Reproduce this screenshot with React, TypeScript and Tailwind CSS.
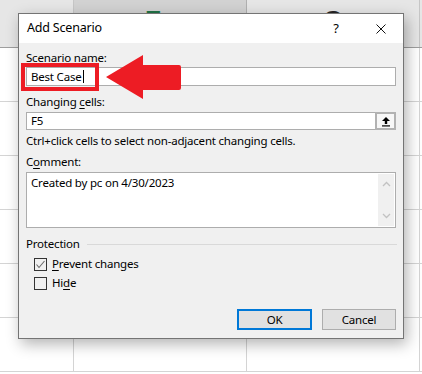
import React from "react";

const font = { fontFamily: '"Segoe UI", "Noto Sans", sans-serif' };

function U({ children }: { children: React.ReactNode }) {
  return <span className="underline underline-offset-2 decoration-1">{children}</span>;
}

function Checkbox({ checked }: { checked: boolean }) {
  return (
    <div className="w-[13px] h-[13px] border border-[#333] bg-[#f0f0f0] flex items-center justify-center">
      {checked && (
        <svg width="11" height="11" viewBox="0 0 11 11">
          <path d="M1.5 5.5 L4 8.5 L9.5 2" fill="none" stroke="#6b6b6b" strokeWidth="1.1" />
        </svg>
      )}
    </div>
  );
}

export default function App() {
  const rows = [0, 1, 2, 3, 4, 5];
  return (
    <div className="relative w-[422px] h-[374px] overflow-hidden bg-white" style={font}>
      {/* Spreadsheet background */}
      <div className="flex flex-col w-[422px]">
        <div className="flex h-[48px] border-b border-[#9e9e9e]">
          <div className="w-[74px] bg-[#e6e6e6] border-r border-[#c6c6c6]" />
          <div className="w-[173px] bg-[#d2d2d2] border-r border-[#b0b0b0] flex justify-center pt-[7px] pr-[14px]">
            <span className="text-[26px] leading-none font-bold text-[#217346]" style={{ fontFamily: '"Liberation Sans", sans-serif' }}>F</span>
          </div>
          <div className="w-[173px] bg-[#e6e6e6] border-r border-[#c6c6c6] flex justify-center pt-[7px]">
            <span className="text-[26px] leading-none font-bold text-[#262626]" style={{ fontFamily: '"Liberation Sans", sans-serif' }}>G</span>
          </div>
          <div className="flex-1 bg-[#e6e6e6]" />
        </div>
        {rows.map((r) => (
          <div key={r} className="flex h-[54px] border-b border-[#d4d4d4]">
            <div className="w-[74px] border-r border-[#d4d4d4]" />
            <div className="w-[173px] border-r border-[#d4d4d4]" />
            <div className="w-[173px] border-r border-[#d4d4d4]" />
            <div className="flex-1" />
          </div>
        ))}
      </div>

      {/* Dialog */}
      <div className="absolute left-[18px] top-[13px] w-[386px] h-[326px] border border-[#747474] bg-[#f0f0f0] shadow-[3px_5px_14px_rgba(0,0,0,0.3)] flex flex-col text-[11.5px] tracking-[-0.2px] text-black">
        <div className="h-[29px] bg-white flex items-center pl-[8px] pr-[17px]">
          <span className="text-[12.5px] flex-1">Add Scenario</span>
          <span className="text-[13px] w-[10px] text-center mr-[35px]">?</span>
          <svg width="10" height="10" viewBox="0 0 10 10">
            <path d="M0.5 0.5 L9.5 9.5 M9.5 0.5 L0.5 9.5" stroke="#111" strokeWidth="1" />
          </svg>
        </div>
        <div className="flex flex-col px-[7px] pt-[7px]">
          <div className="h-[16px] flex items-center">
            <span>Scenario <U>n</U>ame:</span>
          </div>
          <div className="mt-[1px] h-[19px] border border-[#adadad] bg-white flex items-center pl-[4px]">
            <span>Best Case</span>
            <span className="w-[1px] h-[13px] bg-black ml-[1px]" />
          </div>
          <div className="mt-[8px] h-[16px] flex items-center">
            <span>Changing <U>c</U>ells:</span>
          </div>
          <div className="mt-[2px] h-[18px] border border-[#adadad] bg-white flex items-center pl-[4px] relative">
            <span className="flex-1">F5</span>
            <div className="w-[21px] h-[18px] -mr-[1px] border-2 border-[#b2b2b2] bg-[#f7f7f7] flex items-center justify-center">
              <svg width="10" height="11" viewBox="0 0 10 11">
                <path d="M5 1 L9 5 L6.2 5 L6.2 8 L3.8 8 L3.8 5 L1 5 Z" fill="#000" />
                <rect x="1" y="9.3" width="8" height="1.2" fill="#000" />
              </svg>
            </div>
          </div>
          <div className="mt-[3px] h-[16px] flex items-center">
            <span>Ctrl+click cells to select non-adjacent changing cells.</span>
          </div>
          <div className="mt-[5px] h-[16px] flex items-center">
            <span>C<U>o</U>mment:</span>
          </div>
          <div className="mt-[2px] h-[56px] border border-[#adadad] bg-white flex">
            <div className="flex-1 pl-[4px] pt-[1px]">Created by pc on 4/30/2023</div>
            <div className="w-[16px] my-[1px] mr-[1px] bg-[#f0f0f0] flex flex-col items-center justify-between py-[7px]">
              <svg width="9" height="6" viewBox="0 0 9 6">
                <path d="M1 5 L4.5 1.5 L8 5" fill="none" stroke="#c2c2c2" strokeWidth="1.3" />
              </svg>
              <svg width="9" height="6" viewBox="0 0 9 6">
                <path d="M1 1 L4.5 4.5 L8 1" fill="none" stroke="#c2c2c2" strokeWidth="1.3" />
              </svg>
            </div>
          </div>
          <div className="mt-[8px] h-[16px] flex items-center">
            <span>Protection</span>
            <div className="flex-1 h-[1px] bg-[#d9d9d9] ml-[7px] mr-[-1px]" />
          </div>
          <div className="mt-[4px] h-[16px] flex items-center pl-[8px] gap-[5px]">
            <Checkbox checked />
            <span><U>P</U>revent changes</span>
          </div>
          <div className="mt-[3px] h-[16px] flex items-center pl-[8px] gap-[5px]">
            <Checkbox checked={false} />
            <span>Hi<U>d</U>e</span>
          </div>
          <div className="mt-[18px] flex justify-end gap-[10px]">
            <button className="w-[75px] h-[21px] border-2 border-[#0078d7] bg-[#e1e1e1] flex items-center justify-center">OK</button>
            <button className="w-[74px] h-[21px] border border-[#adadad] bg-[#e1e1e1] flex items-center justify-center">Cancel</button>
          </div>
        </div>
      </div>

      {/* Red highlight box */}
      <div className="absolute left-[21px] top-[63px] w-[78px] h-[28px] border-[4px] border-[#ed1c24]" />

      {/* Red arrow */}
      <svg className="absolute left-0 top-0" width="422" height="374" viewBox="0 0 422 374">
        <path d="M106 77 L143 55 L143 65 L179 65 Q181 65 181 67 L181 88 Q181 90 179 90 L143 90 L143 99 Z" fill="#ed1c24" />
      </svg>
    </div>
  );
}
